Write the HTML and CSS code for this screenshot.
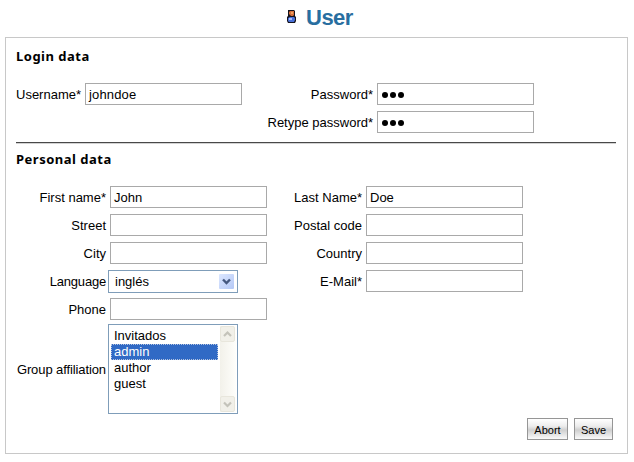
FILE: index.html
```html
<!DOCTYPE html>
<html lang="en">
<head>
<meta charset="utf-8">
<title>User</title>
<link rel="stylesheet" href="styles.css">
</head>
<body>
<header class="title">
  <svg class="person" width="9" height="14" viewBox="0 0 9 14">
    <path d="M1 0h6l1 1v5l1 1v4l-1 2H1l-1-2V7l1-1z" fill="#15131c"/>
    <path d="M3 1h4v4L6 6H4L2 4V2z" fill="#d5703b"/>
    <path d="M4 2h2v2H4z" fill="#f0a060"/>
    <path d="M1 8l2-1h4l1 1v2l-1 2H2l-1-1z" fill="#4870d8"/>
    <path d="M2 8h3v2H2z" fill="#a5bcff"/>
  </svg>
  <h1>User</h1>
</header>
<form class="panel">
  <h2 class="login-heading">Login data</h2>
  <div class="fields login">
    <label>Username*</label><div class="input user">johndoe</div>
    <label>Password*</label><div class="input dots"><i></i><i></i><i></i></div>
    <label class="retype">Retype password*</label><div class="input dots"><i></i><i></i><i></i></div>
  </div>
  <hr>
  <h2 class="personal-heading">Personal data</h2>
  <div class="fields personal">
    <label>First name*</label><div class="input">John</div>
    <label>Last Name*</label><div class="input">Doe</div>
    <label>Street</label><div class="input"></div>
    <label>Postal code</label><div class="input"></div>
    <label>City</label><div class="input"></div>
    <label>Country</label><div class="input"></div>
    <label class="language">Language</label>
    <div class="select"><span>inglés</span>
      <svg width="15" height="17" viewBox="0 0 15 17"><defs><linearGradient id="b" x2="1" y2="1"><stop stop-color="#dce7ff"/><stop offset="1" stop-color="#b4c8f6"/></linearGradient></defs><rect y="1" width="15" height="15" rx="1" fill="url(#b)"/><path d="M4 6.5l3.5 3.5L11 6.5" fill="none" stroke="#45587f" stroke-width="2.4"/></svg>
    </div>
    <label>E-Mail*</label><div class="input"></div>
    <label class="first">Phone</label><div class="input"></div>
  </div>
  <div class="group">
    <label>Group affiliation</label>
    <div class="listbox">
      <ul><li>Invitados</li><li class="selected">admin</li><li>author</li><li>guest</li></ul>
      <div class="scrollbar">
        <svg width="15" height="16" viewBox="0 0 15 16"><rect x=".5" y=".5" width="14" height="15" rx="1.5" fill="#f1f0e9" stroke="#e8e6dc"/><path d="M4 10l3.5-3.5L11 10" fill="none" stroke="#c4c3ba" stroke-width="2.2"/></svg>
        <svg width="15" height="16" viewBox="0 0 15 16"><rect x=".5" y=".5" width="14" height="15" rx="1.5" fill="#f1f0e9" stroke="#e8e6dc"/><path d="M4 6.5L7.5 10 11 6.5" fill="none" stroke="#c4c3ba" stroke-width="2.2"/></svg>
      </div>
    </div>
  </div>
  <div class="actions"><button type="button" class="abort">Abort</button><button type="button" class="save">Save</button></div>
</form>
</body>
</html>
```
FILE: styles.css
```css
* { box-sizing: border-box; }
body { margin: 0; background: #fff; color: #000; font: 13px/16px "Liberation Sans", Arial, sans-serif; overflow: hidden; }
.title { height: 37px; display: flex; align-items: flex-start; padding-left: 287px; }
.person { margin-top: 10px; }
h1 { margin: 4px 0 0 10px; font-size: 22px; line-height: 27px; letter-spacing: -.5px; color: #286ea0; }
.panel { width: 623px; height: 417px; margin-left: 5px; padding: 0 10px; border: 1px solid #c8c8c8; }
h2 { margin: 0; font: bold 13px/16px "Noto Sans", sans-serif; letter-spacing: .5px; }
.login-heading { padding-top: 10px; height: 45px; }
.fields { display: grid; column-gap: 4px; row-gap: 6px; grid-auto-rows: 22px; align-items: center; }
.login { grid-template-columns: 65px 157px 127px 157px; }
.personal { grid-template-columns: 90px 157px 91px 157px; }
label { padding-top: 2px; text-align: right; white-space: nowrap; }
.language { letter-spacing: -.2px; }
.retype { grid-column: 3; }
.first { grid-column: 1; }
.input { width: 157px; height: 22px; border: 1px solid #a9a9a9; padding: 3px 3px 0; line-height: 16px; }
.user { letter-spacing: .15px; }
.dots { display: flex; gap: 2px; padding: 8px 0 0 4px; }
.dots i { width: 6px; height: 6px; border-radius: 3px; background: #000; }
hr { width: 600px; height: 2px; margin: 9px 0 0; border: 0; border-top: 1px solid #484848; border-bottom: 1px solid #d2d2d2; }
.personal-heading { height: 42px; padding-top: 7px; }
.select { width: 130px; height: 23px; margin-left: -2px; border: 1px solid #7f9db9; padding: 0 3px 0 6px; display: flex; align-items: center; justify-content: space-between; }
.select span { padding-top: 1px; }
.group { display: flex; align-items: center; margin-top: 4px; }
.group label { width: 90px; padding-top: 1px; letter-spacing: -.1px; }
.listbox { width: 130px; height: 90px; margin-left: 2px; border: 1px solid #7f9db9; padding: 1px; display: flex; }
ul { list-style: none; margin: 2px 2px 0 1px; padding: 0; width: 107px; }
li { height: 16px; padding-left: 3px; line-height: 16px; }
.selected { background: #316ac5; color: #fff; outline: 1px dotted #b5c4df; outline-offset: -1px; }
.scrollbar { width: 16px; display: flex; flex-direction: column; justify-content: space-between; background: linear-gradient(90deg, #f2f1ea, #fefefb); }
.scrollbar svg { display: block; }
.actions { display: flex; justify-content: flex-end; gap: 6px; margin: 4px 4px 0 0; }
button { height: 22px; padding: 2px 0 0; border: 1px solid #969696; background: linear-gradient(#fff, #ededed 35%, #cfcfcf 55%, #fafafa); color: #000; font: 11px/16px "Liberation Sans", Arial, sans-serif; }
.abort { width: 41px; }
.save { width: 39px; }
```
